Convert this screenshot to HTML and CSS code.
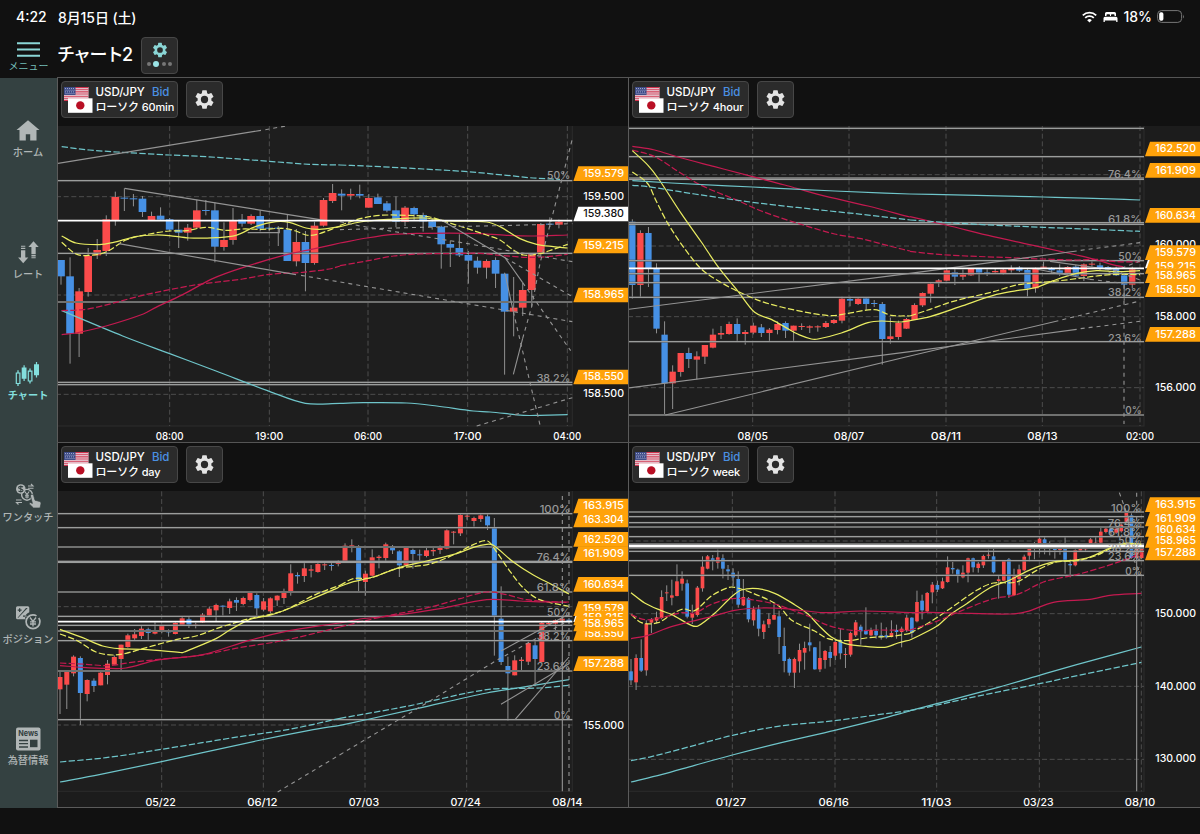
FILE: index.html
```html
<!DOCTYPE html>
<html lang="ja">
<head>
<meta charset="utf-8">
<title>チャート2</title>
<link rel="stylesheet" href="styles.css">
</head>
<body>
<svg class="defs" width="0" height="0" aria-hidden="true">
  <symbol id="gear" viewBox="0 0 24 24"><path fill-rule="evenodd" d="M19.14 12.94c.04-.3.06-.61.06-.94s-.02-.64-.07-.94l2.03-1.58a.49.49 0 0 0 .12-.61l-1.92-3.32a.49.49 0 0 0-.59-.22l-2.39.96a7 7 0 0 0-1.62-.94l-.36-2.54a.48.48 0 0 0-.48-.41h-3.84a.48.48 0 0 0-.47.41l-.36 2.54a7.3 7.3 0 0 0-1.62.94l-2.39-.96a.48.48 0 0 0-.59.22L2.74 8.87a.47.47 0 0 0 .12.61l2.03 1.58a7.5 7.5 0 0 0 0 1.88l-2.03 1.58a.49.49 0 0 0-.12.61l1.92 3.32c.12.22.37.29.59.22l2.39-.96c.5.38 1.03.7 1.62.94l.36 2.54c.05.24.24.41.48.41h3.84c.24 0 .44-.17.47-.41l.36-2.54a7 7 0 0 0 1.62-.94l2.39.96c.22.08.47 0 .59-.22l1.92-3.32a.47.47 0 0 0-.12-.61zM12 15.8a3.8 3.8 0 1 1 0-7.6 3.8 3.8 0 0 1 0 7.6z"/></symbol>
  <symbol id="flags" viewBox="0 0 29 26">
    <rect width="24.5" height="14" fill="#e9e9ee"/>
    <path d="M0 .6h24.500M0 2.700h24.500M0 4.900h24.500M0 7h24.500M0 9.200h24.500M0 11.300h24.500M0 13.400h24.500" stroke="#d2344f" stroke-width="1.1"/>
    <rect width="11.5" height="8" fill="#3c4a86"/>
    <path d="M1 1.500h10M1.500 3.200h10M1 4.900h10M1.500 6.600h10" stroke="#b9bfdc" stroke-width=".8" stroke-dasharray="1 1"/>
    <rect x="4" y="11.3" width="24.5" height="14.5" fill="#fff"/>
    <circle cx="16.3" cy="18.4" r="4.2" fill="#b80f24"/>
  </symbol>
</svg>

<header class="top">
  <div class="status">
    <span class="clock">4:22</span><span class="date">8月15日 (土)</span>
    <span class="system">
      <svg width="15" height="12" viewBox="0 0 15 12" fill="none" stroke="#fff" stroke-width="1.8"><path d="M.8 4.300a9.600 9.600 0 0 1 13.400 0M3.200 6.900a6.200 6.200 0 0 1 8.600 0"/><path d="M5.200 9.200a3.300 3.300 0 0 1 4.600 0L7.500 11.500z" fill="#fff" stroke="none"/></svg>
      <svg width="15" height="12" viewBox="0 0 15 12" fill="#fff"><path d="M2 5V2.500Q2 1 3.500 1h8Q13 1 13 2.500V5h-1.500V4q0-.8-.8-.8H8.800Q8 3.200 8 4v1H7V4q0-.8-.8-.8H4.300q-.8 0-.8.800v1zM.5 7.200Q.5 5.700 2 5.700h11q1.500 0 1.500 1.500V11h-1.300V9.500H1.800V11H.5z"/></svg>
      <span class="percent">18%</span>
      <svg width="28" height="13" viewBox="0 0 28 13"><rect x=".6" y=".6" width="24" height="11.8" rx="3.8" fill="none" stroke="#777"/><rect x="2.2" y="2.2" width="4.2" height="8.6" rx="1.7" fill="#fff"/><path d="M26 4.500q1.600 2 0 4z" fill="#777"/></svg>
    </span>
  </div>
  <div class="titlebar">
    <button class="menu"><svg width="23" height="15" viewBox="0 0 23 15"><path d="M0 1.200h23M0 7.500h23M0 13.800h23" stroke="#8ad6d6" stroke-width="2"/></svg><span>メニュー</span></button>
    <h1>チャート2</h1>
    <button class="layout-btn"><svg class="gear-cyan" width="18" height="18"><use href="#gear"/></svg><span class="dots"><i></i><i class="on"></i><i></i><i></i></span></button>
  </div>
</header>

<div class="body">
  <nav class="side">
    <a><svg viewBox="0 0 28 26"><path d="M14 2.300 2.500 12h3v10.500h6.300v-6.300h4.400v6.300h6.300V12h3z"/></svg><span>ホーム</span></a>
    <a><svg viewBox="0 0 28 26"><path d="M19.500 1.300 24.700 7h-3v7.300h-4.300V7h-3zM17.400 15.100h4.300v1.300h-4.300zM17.400 17.300h4.300v1h-4.300zM9.200 23.300 4.100 17.600H7V10.200h4.300v7.400h3zM7 5.700h4.300v1H7zM7 7.700h4.300v1.400H7z"/></svg><span>レート</span></a>
    <a class="active"><svg viewBox="0 0 28 26"><path d="M4 9.300v3M4 22.500v2.500M16 7.500v3M16 20v2.500" stroke="currentColor" stroke-width="1.3"/><path d="M2.300 12h3.600v10.500H2.300zM14.300 10.200h3.600V20h-3.600z" fill="none" stroke="currentColor" stroke-width="1.2"/><path d="M7.700 6.500h1.800V4.300h1.200v2.200h1.800v11.200h-1.800v2.200H9.500v-2.200H7.700zM20 3.200h1.900V1h1.200v2.200H25v11.100h-1.900v2.200h-1.200v-2.200H20z"/></svg><span>チャート</span></a>
    <a><svg viewBox="0 0 28 26"><circle cx="6.8" cy="6" r="4.8"/><circle cx="13" cy="11.8" r="5.4" fill="none" stroke="currentColor" stroke-width="1.4"/><path d="m10.800 8.500 2.200 3 2.200-3M13 11.500v4M11 12.300h4M11 14h4M14 3h5l-2-2M19.500 5.200H14M8 19.500H2.500l2 2M2 17h5.500" fill="none" stroke="currentColor" stroke-width="1.1"/><path d="M9 4.100C8 3 4.600 3.100 4.600 4.700S9 5.800 9 7.400 5.500 9 4.500 7.900M6.800 2.600v7" fill="none" stroke="#334040" stroke-width="1.1"/><path d="M17.500 11.500q1.700-.7 2.100.7l1.400 5 4.800 1.300q1.500.5 1.200 2.300L26 25h-6.500l-4.200-4.100q-.5-1.200.8-1.500l2.300 1-2-7.600q-.1-.9 1.100-1.300z" stroke="#334040" stroke-width=".7"/></svg><span>ワンタッチ</span></a>
    <a><svg viewBox="0 0 28 26"><path fill-rule="evenodd" d="M3.500 1.300h10.300q1.500 0 1.500 1.500v4.500q-5 2-4 7H3.500Q2 14.300 2 12.800v-10q0-1.500 1.500-1.500zm0 11.500h.8L13.700 2.900H12zM5 3.200v1.300H3.700v1.300H5v1.300h1.300V5.800h1.300V4.500H6.300V3.200zm4 7.300v1.300h3.500v-1.300z"/><circle cx="19" cy="16.8" r="6.9" fill="none" stroke="currentColor" stroke-width="1.7" stroke-dasharray="36 3"/><path d="m16 12.500 3 4 3-4M19 16.500v5M16 16.800h6M16 19h6" fill="none" stroke="currentColor" stroke-width="1.3"/></svg><span>ポジション</span></a>
    <a><svg viewBox="0 0 28 26"><rect x="2" y="1.5" width="24.5" height="23" rx="2"/><text x="14.2" y="10.2" class="news-word" text-anchor="middle" textLength="20" lengthAdjust="spacingAndGlyphs">News</text><path d="M5 14.500h9M5 17.700h9M5 21h9" stroke="#334040" stroke-width="1.3"/><rect x="16" y="13.7" width="7.5" height="7.5" fill="#334040"/></svg><span>為替情報</span></a>
  </nav>

  <main class="grid">
    <section class="panel">
      <div class="tools"><button class="pair"><svg width="29" height="26"><use href="#flags"/></svg><span class="pair-text"><span>USD/JPY <b>Bid</b></span><span>ローソク 60min</span></span></button><button class="cog"><svg width="23" height="23"><use href="#gear"/></svg></button></div>
      <svg class="chart" id="h1" viewBox="6 18 1710 948"></svg>
    </section>
    <section class="panel">
      <div class="tools"><button class="pair"><svg width="29" height="26"><use href="#flags"/></svg><span class="pair-text"><span>USD/JPY <b>Bid</b></span><span>ローソク 4hour</span></span></button><button class="cog"><svg width="23" height="23"><use href="#gear"/></svg></button></div>
      <svg class="chart" id="h4" viewBox="3 18 1713 948"></svg>
    </section>
    <section class="panel">
      <div class="tools"><button class="pair"><svg width="29" height="26"><use href="#flags"/></svg><span class="pair-text"><span>USD/JPY <b>Bid</b></span><span>ローソク day</span></span></button><button class="cog"><svg width="23" height="23"><use href="#gear"/></svg></button></div>
      <svg class="chart" id="d1" viewBox="6 17 1710 948"></svg>
    </section>
    <section class="panel">
      <div class="tools"><button class="pair"><svg width="29" height="26"><use href="#flags"/></svg><span class="pair-text"><span>USD/JPY <b>Bid</b></span><span>ローソク week</span></span></button><button class="cog"><svg width="23" height="23"><use href="#gear"/></svg></button></div>
      <svg class="chart" id="w1" viewBox="3 17 1713 948"></svg>
    </section>
  </main>
</div>
<script src="charts.js"></script>
</body>
</html>
```

FILE: styles.css
```css
* { box-sizing: border-box; }

body {
  margin: 0;
  width: 1200px;
  height: 834px;
  overflow: hidden;
  background: #111;
  color: #fff;
  font-family: Inter, "Noto Sans CJK JP", sans-serif;
}

button {
  margin: 0;
  padding: 0;
  border: 0;
  background: none;
  color: inherit;
  font: inherit;
}

.defs { display: block; width: 0; height: 0; }

.top { height: 78px; }

.status {
  display: flex;
  align-items: center;
  height: 33px;
  padding: 0 15px 0 16px;
  font-size: 14px;
  font-weight: 500;
}
.clock { width: 42px; white-space: nowrap; }
.date { white-space: nowrap; letter-spacing: -0.1px; }
.system { display: flex; align-items: center; gap: 5.5px; margin-left: auto; }
.system .percent { margin-right: -0.5px; }

.titlebar { display: flex; height: 44px; }
.menu {
  display: flex;
  flex-direction: column;
  align-items: center;
  width: 57px;
  padding-top: 9px;
  color: #74bdb8;
  font-size: 10px;
  line-height: 15px;
}
.menu svg { display: block; margin-bottom: 2px; }
h1 {
  width: 84px;
  margin: 0;
  font-size: 18px;
  font-weight: 500;
  line-height: 43px;
  white-space: nowrap;
  letter-spacing: -1.7px;
}

.layout-btn, .pair, .cog {
  border: 1px solid #474747;
  border-radius: 4px;
  background: #2b2b2b;
}
.layout-btn {
  display: flex;
  flex-direction: column;
  align-items: center;
  width: 37px;
  height: 37px;
  margin-top: 4px;
  padding-top: 3px;
}
.gear-cyan { flex: none; fill: #8ad6d6; }
.dots { display: flex; align-items: center; gap: 2.5px; height: 8px; margin-top: 1px; }
.dots i { width: 4px; height: 4px; border-radius: 50%; background: #777; }
.dots .on { width: 6px; height: 6px; background: #9be4e6; }

.body { display: flex; height: 730px; }

.side {
  display: flex;
  flex-direction: column;
  width: 57px;
  padding-right: 1px;
  background: #344141;
  color: #b0b6b6;
}
.side a {
  display: flex;
  flex: 1;
  flex-direction: column;
  align-items: center;
  padding-top: 40px;
  font-size: 10.2px;
  font-weight: 500;
  line-height: 17px;
  white-space: nowrap;
}
.side svg { display: block; width: 28px; height: 26px; fill: currentColor; }
.side .active { color: #83dfdd; }
.side .active span { font-weight: 700; }
.side .news-word { fill: #334040; font-size: 8px; font-weight: 700; }

.grid {
  display: grid;
  grid-template-columns: 571px 572px;
  grid-template-rows: 365px 365px;
}
.panel {
  border-left: 1px solid #5b5b5b;
  border-bottom: 1px solid #5b5b5b;
  box-shadow: 0 -1px 0 #555;
}
.tools { display: flex; gap: 8px; height: 48px; padding: 3px 0 0 3px; }
.pair {
  display: flex;
  width: 117px;
  height: 37px;
  padding: 5px 0 0 2px;
}
.pair > svg { flex: none; display: block; }
.pair-text {
  display: flex;
  flex-direction: column;
  margin: -2px 0 0 2.5px;
  font-size: 11.5px;
  font-weight: 500;
  line-height: 15px;
  text-align: left;
  white-space: nowrap;
}
.pair-text span + span { font-size: 11px; letter-spacing: -0.15px; }
.pair-text b { margin-left: 4px; color: #4a90e2; font-weight: 500; }
.cog { display: flex; width: 37px; height: 37px; align-items: center; justify-content: center; }
.cog svg { fill: #e4e4e4; }

.chart { display: block; width: 100%; height: 316px; background: #1c1c1c; }
.chart text { font-family: Inter, sans-serif; font-weight: 500; fill: #fff; }
.chart .plot { fill: #1e1e1e; stroke: #2c2c2c; stroke-width: 3; }
.gridline { stroke: #4c4c4c; stroke-width: 3; stroke-dasharray: 15 8; fill: none; }
.level { stroke: #9b9d9c; stroke-width: 3.4; }
.level-halo { stroke: #444; stroke-width: 5.4; }
.level-bright { stroke: #fff; stroke-width: 5; }
.wick { stroke: #909090; stroke-width: 3; }
.up { fill: #fb4b4b; }
.down { fill: #4690e4; }
.ma, .trend { fill: none; }
.ma { stroke-width: 3.7; }
.trend { stroke: #949494; stroke-width: 3.3; }
.dash { stroke-dasharray: 19 7; }
.trend.dash { stroke-dasharray: 12 12; }
.yellow { stroke: #e9ec62; }
.crimson { stroke: #c41a50; }
.cyan { stroke: #6fc5ca; }
.chart .ratio { fill: #a2a2a2; font-size: 32px; font-weight: 500; opacity: .92; }
.tag { fill: #ffa20a; }
.tag-now { fill: #fff; }
.chart .price { font-size: 30px; }
.chart .price-now { fill: #111; }
.chart .time { font-size: 32px; }
```

FILE: charts.js
```js
// Coordinates are thirds of a pixel. Each chart is stored in two halves;
// the second half is moved to its place by its own x/y offset.
// Candle: [direction, body top, body bottom, high, low]
const charts = {
  h1: {
    right: 1549, x0: 15, step: 27.16, width: 23, part: [[0, 0], [852, 0]],
    rows: [230, 525, 823], cols: [341, 640, 936, 1235, 1534],
    times: ['08:00', '19:00', '06:00', '17:00', '04:00'],
    levels: [182, 400, 546, 787, 794], now: [302, 5],
    candles: `B420 469 420 494,B469 641 412 731,R514 641 504 711,R408 516 384 530,R390 406 357 417,R298 393 286 408,R231 301 215 317,B233 236 205 273,B235 237 222 259,B236 276 228 291,R288 300 275 300,B287 299 262 299,B298 329 294 335,B329 338 300 384,R323 338 312 362,R271 323 239 327,B270 272 240 286,B271 380 247 427,R360 381 307 392,R300 360 264 374,B299 311 282 320,R288 311 283 315,B288 326 271 334,B323 325 310 334,B323 326 318 378,B329 423 284 423,R366 424 327 439,B366 429 333 514,R317 429 305 434,R240 317 234 320,R219 243 192 249,B221 227 208 271,R222 227 206 239,B222 227 194 235,R234 263 222 263,B232 252 221 252,B250 272 243 277,B271 305 229 322,R263 305 258 318,B264 283 260 300,B285 304 278 335,B304 321 296 329,B320 373 317 446,B372 383 362 441,B384 406 343 411,B405 422 393 491,B422 443 410 461,R423 443 418 476,B420 461 412 504,B461 575 458 764,R563 575 471 649,R510 563 488 588,R401 510 401 560,R312 401 309 408,B311 314 292 321,R305 314 299 325`,
    lines: [
      [['cyan dash', '17,80 100,90 200,97 341,105 450,110 640,124 760,133 852,135'],
       ['cyan', '17,572 200,648 341,701 480,753 640,814 748,850 852,850'],
       ['crimson', '17,644 60,639 150,618 262,582 300,562 380,524 470,476 560,443 680,407 780,385 852,369'],
       ['crimson dash', '17,572 80,569 130,560 260,526 341,509 430,493 560,477 640,463 740,457 820,447 852,438'],
       ['yellow', '17,348 60,369 130,374 170,368 240,350 300,345 340,347 400,354 480,353 540,346 600,319 660,305 700,307 750,324 790,328 852,320'],
       ['yellow dash', '17,367 60,402 100,406 150,396 210,360 280,342 341,333 390,332 450,322 510,331 560,327 620,328 680,325 720,333 750,345 780,344 852,318']],
      [['cyan dash', '0,135 100,139 250,147 383,155 500,166 580,174 660,178'],
       ['cyan', '0,850 70,848 200,849 290,858 400,873 450,876 550,886 600,886 683,884'],
       ['crimson', '0,369 80,354 160,343 230,340 400,340 500,346 580,348 683,345'],
       ['crimson dash', '0,437 90,421 160,408 240,402 330,401 420,400 480,406 560,412 620,410 683,403'],
       ['yellow', '0,320 60,306 150,298 250,294 300,300 330,303 440,306 480,320 540,356 590,373 640,380 683,384'],
       ['yellow dash', '0,316 60,296 120,286 200,286 270,291 310,303 380,325 440,345 480,360 520,390 550,405 600,401 640,388 683,373']]],
    trends: [
      [['', '6,130 615,31'], ['dash', '628,29 695,17'], ['', '206,205 810,302'], ['', '188,371 720,464'], ['dash', '735,466 1549,605'], ['', '575,338 670,338 670,325']],
      [['dash', '0,305 60,318 360,367 697,425'], ['dash', '0,329 240,322 520,316 697,311'], ['', '300,298 495,413 548,488'], ['dash', '548,488 692,692'], ['', '495,461 520,575'], ['dash', '520,575 600,915'], ['', '520,763 548,655'], ['dash', '548,655 575,560 600,430 697,57'], ['dash', '495,413 697,530'], ['dash', '410,918 697,833']]],
    ratios: [['50%', 166], ['38.2%', 773]], ratioEnd: 1543,
    tagX: 1552, tagEnd: 1716,
    prices: [['159.500', 230], ['158.500', 821]],
    tags: [['159.579', 161], ['159.380', 282, 1], ['159.215', 378], ['158.965', 525], ['158.550', 771]]
  },
  h4: {
    right: 1548, x0: 13, step: 24.19, width: 19, split: 36, part: [[0, -126], [846, 0]],
    rows: [164, 378, 590, 803], cols: [374, 663, 954, 1243, 1536],
    times: ['08/05', '08/07', '08/11', '08/13', '02:00'],
    levels: [25, 110, 174, 178, 308, 313, 422, 461, 488, 532, 665, 885], now: [445, 5],
    candles: `B431 621 424 662,R465 621 457 657,B465 571 447 627,B571 752 556 766,B770 916 730 1012,R881 916 862 993,R825 882 825 896,B825 843 809 870,R835 845 820 904,R801 836 801 858,R770 809 752 811,R765 770 744 783,R738 768 731 770,B738 768 721 790,R762 768 756 800,R743 764 734 769,B748 765 738 777,R755 765 750 789,R738 756 730 769,B735 758 730 780,R743 758 743 790,R744 746 736 756,R745 749 742 765,R745 747 742 761,R735 747 729 750,R726 735 723 738,R662 728 656 736,B663 668 656 685,R662 678 657 681,B661 678 657 696,B675 677 666 687,B678 783 672 860,R775 783 719 797,R735 777 728 785,R723 752 720 753,R681 726 676 726,R519 556 517 561,R491 521 489 548,R481 487 477 501,R451 482 446 484,B457 470 448 495,R464 470 449 480,R447 466 445 468,B447 458 445 486,B457 459 448 468,R453 457 447 460,R449 460 444 464,R446 451 436 458,B443 452 438 456,B450 506 446 530,R446 505 443 518,R440 443 424 447,B447 451 441 460,B451 463 433 468,R441 462 438 465,B440 467 435 468,R433 468 430 483,R431 434 420 440,B436 446 428 450,B441 449 438 452,B444 466 440 468,B466 494 466 542,R448 494 440 505`,
    lines: [
      [['crimson', '13,205 80,216 150,237 260,266 374,296 470,321 570,349 720,384 846,417'],
       ['crimson dash', '13,216 80,236 150,280 220,322 330,368 400,399 500,433 620,468 700,482 780,503 846,519'],
       ['yellow', '13,218 60,262 90,300 160,407 220,492 270,566 330,640 380,703 430,724 490,758 520,773 550,783 570,783 640,765 720,734 760,729 820,732 846,728'],
       ['yellow dash', '13,282 60,318 85,370 120,437 170,512 220,573 280,614 340,645 400,670 460,687 540,704 610,713 660,706 740,695 790,712 846,714'],
       ['cyan', '13,308 130,315 374,327 620,339 846,348'],
       ['cyan dash', '13,322 60,326 200,348 374,373 550,393 700,409 846,426']],
      [['crimson', '0,290 108,315 250,350 397,382 500,405 550,417 620,437 640,440'],
       ['crimson dash', '0,394 60,401 150,407 300,413 400,417 500,420 560,418 620,425 690,426'],
       ['yellow', '0,602 60,590 150,560 250,526 320,512 380,502 430,482 500,460 560,452 620,455 690,452'],
       ['yellow dash', '0,588 60,568 130,544 250,515 320,495 380,488 430,484 500,476 560,468 620,463 690,464'],
       ['cyan', '0,222 200,226 400,231 550,235 690,240'],
       ['cyan dash', '0,300 200,313 400,322 550,328 690,334']]],
    trends: [
      [['', '0,694 846,586'], ['', '0,930 846,821'], ['', '112,1011 846,834']],
      [['', '0,460 500,393'], ['dash', '512,391 690,368'], ['', '0,695 500,628'], ['dash', '512,626 695,603'], ['', '0,708 445,602'], ['dash', '457,599 690,543'], ['', '420,424 610,450'], ['dash', '610,450 690,480'], ['', '380,448 540,478'], ['dash', '540,478 640,490'], ['dash', '590,462 690,423'], ['dash', '642,494 642,912']]],
    ratios: [['76.4%', 163], ['61.8%', 298], ['50%', 409], ['38.2%', 517], ['23.6%', 653], ['0%', 870]], ratioEnd: 1541,
    tagX: 1551, tagEnd: 1716,
    prices: [['160.000', 374], ['158.000', 590], ['156.000', 803]],
    tags: [['162.520', 87], ['161.909', 151], ['160.634', 286], ['159.380', 423, 1], ['159.215', 439], ['159.579', 398], ['158.965', 467], ['158.550', 509], ['157.288', 643]]
  },
  d1: {
    right: 1549, x0: 12, step: 20.36, width: 15, part: [[0, 0], [852, 0]],
    rows: [364, 719], cols: [317, 622, 927, 1232],
    times: ['05/22', '06/12', '07/03', '07/24', '08/14'], timeX: [314, 619, 924, 1229, 1534],
    levels: [85, 127, 185, 228, 231, 320, 393, 420, 437, 466, 557, 703], now: [409, 5],
    candles: `R575 612 555 686,R559 598 559 671,R514 564 510 573,B518 623 513 719,R584 626 582 648,B586 602 579 620,R562 600 559 600,R535 569 524 597,R515 538 510 538,R478 521 478 555,R450 485 445 487,R447 459 431 465,R430 452 421 461,B432 443 427 465,R439 445 411 447,R422 440 419 443,B438 440 432 454,R413 446 411 447,R399 419 395 422,B402 418 393 428,R418 422 412 429,R388 411 383 412,R370 391 364 392,R359 375 355 408,B361 364 360 391,R348 368 340 386,B344 352 336 377,R338 356 334 360,R323 344 322 348,B329 369 324 391,R348 373 338 378,R339 378 336 384,R331 345 330 362,R319 338 310 356,R264 319 237 331,B269 273 261 295,R249 272 232 290,R252 256 239 276,R236 260 233 262,R237 240 230 254,B239 241 232 256,R230 236 224 243,R181 228 174 230,R180 183 162 201,B182 284 179 318,R265 290 256 331,R216 271 192 274,R214 218 209 249,R177 218 172 230,B182 195 179 206,B198 240 195 275,R188 239 186 240,B194 206 190 250,B207 209 193 226,R195 212 186 216,R194 198 186 212,R187 194 180 206,R135 190 132 192,R139 142 137 177,R89 144 84 152,R91 94 86 105,R98 107 94 124,R90 101 86 110,B93 120 86 134,B125 393 98 511,B400 530 303 539,B542 564 514 706,R525 570 510 570,R523 527 515 557,R473 529 469 539,B480 521 466 603,R413 530 410 532,R413 417 409 418,R405 415 402 440,R400 406 395 420,B403 408 398 410`,
    lines: [
      [['yellow', '12,432 80,457 140,482 190,490 260,492 370,501 380,502 390,498 480,460 520,435 580,403 640,390 680,377 760,344 840,310 852,303'],
       ['yellow dash', '12,446 60,464 120,500 170,509 210,504 260,490 360,463 420,452 490,427 580,400 640,388 690,373 780,327 852,300'],
       ['crimson', '12,541 80,546 150,549 210,548 300,525 440,508 580,465 700,436 800,420 852,413'],
       ['crimson dash', '12,533 90,537 160,541 220,532 300,523 430,510 550,487 680,466 800,438 852,425'],
       ['cyan', '12,890 130,868 317,829 600,767 760,735 852,720'],
       ['cyan dash', '12,830 150,817 317,792 550,754 700,732 852,699']],
      [['yellow', '0,303 40,289 100,275 180,246 260,227 350,205 400,186 440,177 460,180 520,230 580,269 640,300 687,326'],
       ['yellow dash', '0,300 40,280 90,278 170,250 270,236 350,204 400,178 443,167 470,200 510,258 550,308 590,339 640,354 687,363'],
       ['crimson', '0,413 60,401 160,391 300,370 440,343 540,347 620,350 687,350'],
       ['crimson dash', '0,425 80,405 160,388 280,363 360,340 440,320 500,328 560,343 687,352'],
       ['cyan', '0,720 75,704 230,670 440,623 540,607 600,597 687,583'],
       ['cyan dash', '0,699 200,663 440,613 600,608 687,600']]],
    trends: [
      [['dash', '665,920 852,808']],
      [['dash', '0,808 250,659 470,525 687,405'], ['', '483,497 680,390'], ['', '483,657 687,535'], ['', '525,703 687,515'], ['', '667,400 667,918'], ['dash', '667,32 667,400'], ['dash', '687,20 687,918']]],
    ratios: [['100%', 70], ['76.4%', 216], ['61.8%', 306], ['50%', 380], ['38.2%', 452], ['23.6%', 543], ['0%', 690]], ratioEnd: 1543,
    tagX: 1552, tagEnd: 1716,
    prices: [['155.000', 719]],
    tags: [['163.915', 62], ['163.304', 104], ['162.520', 162], ['161.909', 205], ['160.634', 297], ['159.380', 388, 1], ['159.579', 370], ['159.215', 398], ['158.550', 444], ['158.965', 416], ['157.288', 535]]
  },
  w1: {
    right: 1548, x0: 9, step: 15.32, width: 11, part: [[0, 0], [846, 0]],
    rows: [167, 385, 603, 822], cols: [313, 621, 926, 1234, 1540],
    times: ['01/27', '06/16', '11/03', '03/23', '08/10'], timeX: [309, 617, 925, 1231, 1536],
    levels: [80, 94, 112, 125, 154, 176, 188, 198, 226, 270], now: [182, 7],
    candles: `B558 585 521 599,R518 591 507 614,B518 556 462 560,R415 555 405 571,R403 412 398 443,R396 406 379 414,R335 398 315 402,R321 324 300 347,R330 337 283 360,R288 332 237 333,R280 295 258 316,B294 394 283 399,R386 397 358 416,R307 389 302 394,R244 309 213 319,R213 250 209 252,B219 226 209 255,R216 232 193 250,B219 250 207 279,B252 258 239 284,B262 276 249 302,B281 358 258 367,R335 360 281 362,B339 402 335 411,R372 405 363 421,B372 430 359 453,R417 440 406 461,R401 417 384 428,R389 403 358 403,B393 455 376 506,B482 527 427 561,B521 562 517 571,R521 562 517 608,R494 528 475 562,R488 502 469 553,B471 480 415 498,B486 552 485 553,R518 552 468 560,R497 524 494 550,B500 518 482 544,R470 511 468 524,B465 504 430 522,R506 508 488 548,R443 508 439 514,R411 450 404 455,B424 438 418 478,B437 447 366 448,R434 450 427 453,B437 450 418 460,B450 456 412 463,B450 456 426 460,R443 454 405 456,B434 440 418 460,R430 440 424 486,R397 435 388 440,B397 443 396 457,R350 408 316 411,B346 375 328 402,R323 378 320 380,R298 321 290 354,B299 313 286 320,R288 309 277 311,R246 290 213 292,B248 252 230 265,B253 270 250 292,R262 276 240 279,R219 262 217 291,B219 246 217 261,R235 248 230 262,R212 240 208 248,R208 211 193 220,B213 261 190 264,R282 287 271 340,R226 286 225 287,B222 328 218 338,R274 330 250 331,R252 281 238 300,R214 255 208 258,R178 211 173 228,R176 181 170 222,R160 180 155 205,B162 174 154 207,B176 180 168 210,B180 194 174 220,R188 194 172 208,B188 230 155 265,B236 240 222 276,R194 240 192 243,R188 196 178 198,R184 192 176 197,R162 180 158 184,R172 176 155 182,R139 172 128 176,R130 140 122 144,B129 140 124 150,R130 142 124 146,R118 138 112 142,R80 112 78 114,B90 218 84 220,R190 218 180 222,R190 218 186 222`,
    lines: [
      [['yellow', '9,322 50,353 100,376 130,387 190,420 210,422 260,384 310,335 340,314 390,310 440,324 500,358 540,386 570,418 610,455 650,474 700,482 770,486 810,473 846,464'],
       ['yellow dash', '9,387 40,412 90,412 130,388 165,371 200,376 250,332 300,307 320,306 370,322 450,360 490,404 560,437 600,460 660,466 720,457 800,452 846,444'],
       ['crimson', '9,460 60,450 130,424 250,394 320,375 400,368 470,370 590,382 700,377 846,382'],
       ['crimson dash', '9,388 50,403 100,397 160,382 200,383 250,357 310,340 370,343 440,356 500,377 540,392 600,420 670,435 750,434 846,435'],
       ['cyan', '9,890 100,868 200,840 313,809 460,772 620,735 750,703 846,677'],
       ['cyan dash', '9,826 70,814 200,780 313,750 450,723 620,706 750,688 846,676']],
      [['yellow', '0,464 80,423 120,388 170,355 240,307 300,284 350,258 400,238 440,228 490,225 540,215 600,188 640,174 694,176'],
       ['yellow dash', '0,444 60,410 120,370 200,315 250,293 320,290 380,255 440,230 500,226 560,210 620,182 694,178'],
       ['crimson', '0,382 60,381 130,383 300,386 350,379 430,351 540,342 600,330 694,324'],
       ['crimson dash', '0,434 80,408 150,378 250,340 320,328 400,290 450,278 500,268 580,245 640,225 694,205'],
       ['cyan', '0,676 80,655 250,610 388,570 500,538 694,485'],
       ['cyan dash', '0,676 60,664 200,633 388,595 520,567 694,531']]],
    trends: [
      [],
      [['dash', '628,22 660,110'], ['dash', '680,22 680,200'], ['', '680,200 680,918'], ['dash', '660,200 694,270']]],
    ratios: [['100%', 67], ['76.4%', 112], ['61.8%', 140], ['50%', 163], ['38.2%', 187], ['23.6%', 211], ['0%', 256]], ratioEnd: 1541,
    tagX: 1551, tagEnd: 1716,
    prices: [['150.000', 384], ['140.000', 603], ['130.000', 820]],
    tags: [['163.915', 58], ['161.909', 101], ['160.634', 132], ['158.965', 165], ['157.288', 203]]
  }
};

// Smooth curve through the given points, as a cubic path
function curve(points) {
  const p = points.split(' ').map(s => s.split(',').map(Number));
  let d = `M${p[0]}`;
  for (let i = 0; i < p.length - 1; i++) {
    const a = p[i - 1] || p[i], b = p[i], c = p[i + 1], e = p[i + 2] || c;
    const k = (c[0] - b[0]) / 3;
    const m1 = (c[1] - a[1]) / (c[0] - a[0]), m2 = (e[1] - b[1]) / (e[0] - b[0]);
    d += `C${b[0] + k},${b[1] + m1 * k} ${c[0] - k},${c[1] - m2 * k} ${c}`;
  }
  return d;
}

const hline = (y, right, cls, w) =>
  `<path class="${cls}" d="M0 ${y}H${right}"${w ? ` style="stroke-width:${w}"` : ''}/>`;

const label = (t, cls, x, y, anchor, width) =>
  `<text class="${cls}" x="${x}" y="${y}" text-anchor="${anchor}" textLength="${width}" lengthAdjust="spacingAndGlyphs">${t}</text>`;

function render(id, c) {
  let s = `<rect class="plot" x="-6" y="10" width="${c.right + 6}" height="908"/>`;
  c.rows.forEach(y => { s += hline(y, c.right, 'gridline'); });
  c.cols.forEach(x => { s += `<path class="gridline" d="M${x} 18V918"/>`; });

  c.candles.split(',').forEach((row, i) => {
    const [top, bottom, high, low] = row.slice(1).split(' ').map(Number);
    const x = c.x0 + i * c.step;
    const dy = c.split && i < c.split ? c.part[0][1] : 0;
    s += `<path class="wick" d="M${x} ${high + dy}V${low + dy}"/>`;
    s += `<rect class="${row[0] === 'R' ? 'up' : 'down'}" x="${x - c.width / 2}" y="${top + dy}" width="${c.width}" height="${Math.max(bottom - top, 3)}"/>`;
  });

  c.levels.forEach(y => { s += hline(y, c.right, 'level-halo'); });
  c.levels.forEach(y => { s += hline(y, c.right, 'level'); });

  c.part.forEach(([dx, dy], n) => {
    s += `<g transform="translate(${dx} ${dy})">`;
    c.lines[n].forEach(([cls, pts]) => { s += `<path class="ma ${cls}" d="${curve(pts)}"/>`; });
    c.trends[n].forEach(([cls, pts]) => { s += `<polyline class="trend ${cls}" points="${pts}"/>`; });
    s += '</g>';
  });
  s += hline(c.now[0], c.right, 'level-bright', c.now[1]);

  const ratioWidth = { 2: 49, 3: 70, 4: 92, 5: 101 };
  c.ratios.forEach(([t, y]) => { s += label(t, 'ratio', c.ratioEnd, y + 12, 'end', ratioWidth[t.length]); });

  const priceX = c.tagEnd - 12;
  c.prices.forEach(([t, y]) => { s += label(t, 'price', priceX, y + 11, 'end', 122); });
  c.tags.forEach(([t, y, now]) => {
    s += `<path class="${now ? 'tag-now' : 'tag'}" d="M${c.tagX + 15} ${y - 22}H${c.tagEnd}V${y + 22}H${c.tagX}z"/>`;
    s += label(t, now ? 'price price-now' : 'price', priceX, y + 10, 'end', 122);
  });

  c.times.forEach((t, i) => {
    s += label(t, 'time', (c.timeX || c.cols)[i], c.timeX ? 962 : 960, 'middle', t.includes(':') ? 84 : 91);
  });
  document.getElementById(id).innerHTML = s;
}

Object.entries(charts).forEach(([id, c]) => render(id, c));
```
